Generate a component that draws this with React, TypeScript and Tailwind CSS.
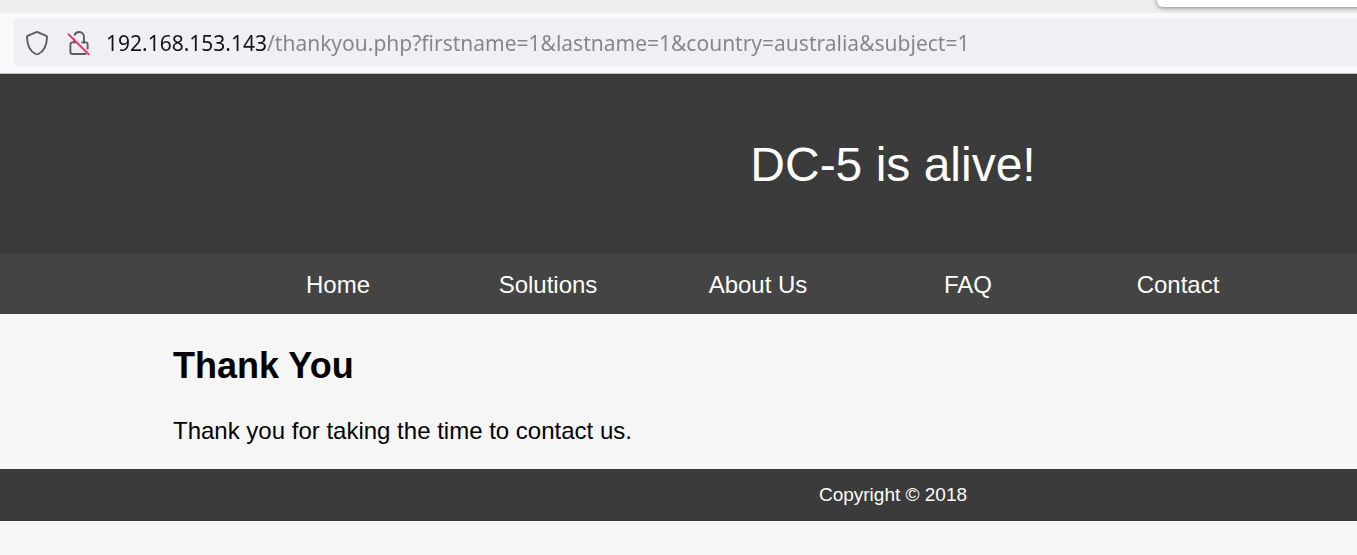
import React from "react";

const navItems: string[] = ["Home", "Solutions", "About Us", "FAQ", "Contact"];

function ShieldIcon() {
  return (
    <svg viewBox="0 0 24 26" className="h-[26px] w-6" fill="none" stroke="#5b5b66" strokeWidth="1.9" strokeLinejoin="round" aria-hidden="true">
      <path d="M12 1.9 L2.6 5.9 C2 6.2 1.9 6.6 2 7.3 C2.2 14.8 5 21.4 10.6 24 Q12 24.7 13.4 24 C19 21.4 21.8 14.8 22 7.3 C22.1 6.6 22 6.2 21.4 5.9 Z" />
    </svg>
  );
}

function InsecureLockIcon() {
  return (
    <svg viewBox="0 0 24 26" className="h-[26px] w-6" fill="none" aria-hidden="true">
      <g stroke="#5b5b66" strokeWidth="1.9" strokeLinecap="butt">
        <path d="M7.4 5.4 C8.2 3.3 9.8 2 12 2 C15 2 17 4.2 17 7.2 V12.4 H18.6 Q20.6 12.4 20.6 14.4 V19.5" />
        <path d="M9.6 12.4 H5.4 Q3.4 12.4 3.4 14.4 V22 Q3.4 24 5.4 24 H19.2" />
        <path d="M7 8.4 V12.4" />
        <path d="M14.4 12.4 H18" />
      </g>
      <path d="M1.6 4.4 L21.6 24.2" stroke="#f5345f" strokeWidth="2" strokeLinecap="round" />
    </svg>
  );
}

function BrowserBar() {
  return (
    <div>
      <div className="relative h-[13px] overflow-hidden bg-[#efefef]">
        <div className="absolute -top-4 left-[1157px] right-[-8px] h-[23px] rounded-md bg-white shadow-[0_1px_5px_rgba(0,0,0,0.45)]" />
      </div>
      <div className="border-b border-[#c4c4c8] bg-[#f9f9fb] py-1.5 pl-3.5">
        <div className="flex h-12 items-center rounded-l bg-[#f0eff4] pl-[11px]">
          <button type="button" aria-label="Tracking protection" className="mr-[18px]">
            <ShieldIcon />
          </button>
          <button type="button" aria-label="Connection not secure" className="mr-[15px]">
            <InsecureLockIcon />
          </button>
          <input
            type="text"
            aria-label="Address"
            defaultValue="192.168.153.143/thankyou.php?firstname=1&lastname=1&country=australia&subject=1"
            className="min-w-0 flex-1 bg-[linear-gradient(90deg,#15141a_160px,#85848a_160px)] bg-clip-text font-['Noto_Sans',sans-serif] text-[21px] leading-8 outline-none [-webkit-text-fill-color:transparent]"
          />
        </div>
      </div>
    </div>
  );
}

export default function App() {
  return (
    <div className="min-h-screen overflow-x-hidden bg-[#f6f6f6] font-['Liberation_Sans',Arial,sans-serif] text-2xl text-black">
      <BrowserBar />
      <header className="bg-[#3b3b3b] pb-[59px] pl-[429px] pt-[61px] text-center text-5xl leading-[60px] text-white">
        DC-5 is alive!
      </header>
      <nav className="bg-[#444444] pl-[233px]">
        <ul className="flex">
          {navItems.map((item) => (
            <li key={item} className="w-[210px] text-center">
              <a href="#" className="block pb-[11px] pt-[13px] leading-9 text-white">
                {item}
              </a>
            </li>
          ))}
        </ul>
      </nav>
      <main className="px-[173px] pb-5 pt-[31px]">
        <h1 className="text-4xl font-bold leading-[42px]">Thank You</h1>
        <p className="mt-[26px] leading-9">Thank you for taking the time to contact us.</p>
      </main>
      <footer className="bg-[#3b3b3b] py-[11px] pl-[429px] text-center text-[19px] leading-[30px] text-white">
        Copyright © 2018
      </footer>
    </div>
  );
}
